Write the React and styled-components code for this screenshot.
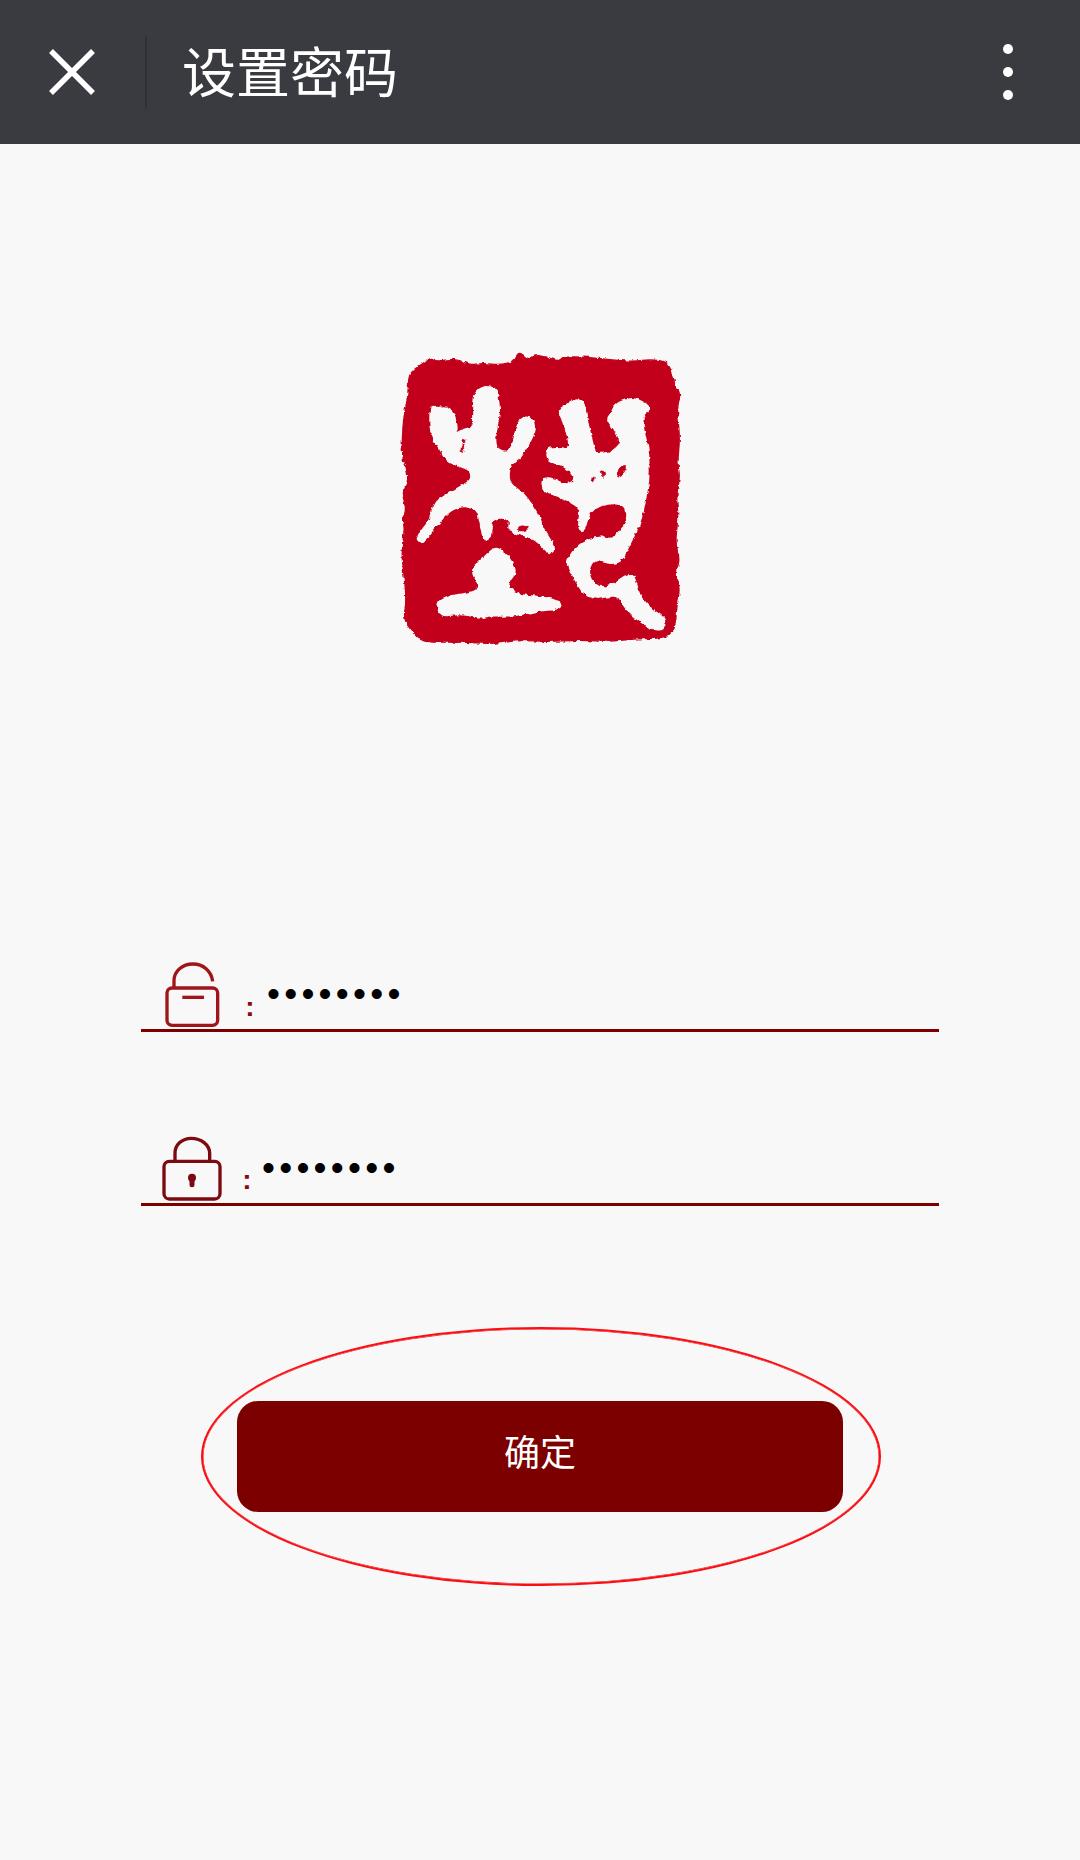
import React from 'react';
import styled, { createGlobalStyle } from 'styled-components';

const GlobalStyle = createGlobalStyle`
  html, body {
    margin: 0;
    padding: 0;
    background: #f8f8f8;
  }
  * { box-sizing: border-box; }
`;

const Page = styled.div`
  width: 1080px;
  height: 1860px;
  display: flex;
  flex-direction: column;
  background: #f8f8f8;
  font-family: "Noto Sans CJK SC", "Noto Sans", sans-serif;
  overflow: hidden;
`;

const Header = styled.header`
  height: 144px;
  flex-shrink: 0;
  display: flex;
  align-items: center;
  background: #3a3b40;
  padding: 0 0 0 49px;
`;

const CloseIcon = styled.svg`
  width: 46px;
  height: 46px;
  display: block;
`;

const Divider = styled.div`
  width: 2px;
  height: 73px;
  margin: 0 35px 0 50px;
  background: #303136;
`;

const Title = styled.h1`
  flex: 1;
  margin: 0 0 4px;
  font-size: 54px;
  font-weight: 400;
  line-height: 60px;
  color: #fff;
`;

const MoreButton = styled.div`
  display: flex;
  flex-direction: column;
  gap: 13px;
  margin-right: 67px;
`;

const MoreDot = styled.span`
  width: 10px;
  height: 10px;
  border-radius: 50%;
  background: #fff;
`;

const SealWrap = styled.div`
  margin-top: 186px;
  display: flex;
  justify-content: center;
`;

const SealSvg = styled.svg`
  width: 320px;
  height: 330px;
  display: block;
`;

const Form = styled.form`
  margin: 300px 141px 0;
  display: flex;
  flex-direction: column;
  gap: 102px;
`;

const Field = styled.div`
  height: 72px;
  display: flex;
  align-items: flex-end;
  border-bottom: 3px solid #7d0000;
  padding-left: ${(p) => p.$indent}px;
`;

const LockIcon = styled.svg`
  width: 62px;
  height: 66px;
  display: block;
  margin-bottom: 1px;
  flex-shrink: 0;
`;

const Colon = styled.span`
  width: ${(p) => p.$width}px;
  padding-left: 10px;
  margin-bottom: ${(p) => p.$lift}px;
  font-family: "Liberation Sans", sans-serif;
  font-size: 28px;
  font-weight: 700;
  line-height: 36px;
  color: #8a0a10;
  text-align: center;
  flex-shrink: 0;
`;

const PasswordInput = styled.input`
  flex: 1;
  min-width: 0;
  height: 40px;
  margin-bottom: ${(p) => p.$lift}px;
  padding: 0;
  border: 0;
  outline: 0;
  background: transparent;
  color: #000;
  font-family: "Liberation Sans", sans-serif;
  font-size: 37px;
  letter-spacing: 4.25px;
`;

const ButtonHalo = styled.div`
  width: 680px;
  height: 259px;
  margin: 121px 0 0 201px;
  display: flex;
  align-items: center;
  justify-content: center;
  border: 2px solid #f80f14;
  border-radius: 50%;
  box-shadow: inset 0 0 0 0.5px #f80f14;
`;

const ConfirmButton = styled.button`
  width: 606px;
  height: 111px;
  margin-right: 2px;
  padding: 0 0 13px;
  border: 0;
  border-radius: 21px;
  background: #7d0000;
  color: #fff;
  font-family: "Noto Sans CJK SC", "Noto Sans", sans-serif;
  font-size: 36px;
  font-weight: 400;
`;

const SEAL_OUTLINE = [[85,140],[100,120],[130,100],[150,85],[175,95],[205,88],[240,90],[265,105],[310,100],[360,105],[405,95],[412,70],[425,70],[445,90],[465,75],[500,80],[535,95],[550,80],[620,82],[700,90],[760,95],[810,88],[860,95],[878,130],[885,170],[902,190],[890,240],[900,320],[892,400],[900,440],[888,500],[895,560],[885,640],[900,690],[885,730],[900,770],[890,830],[885,900],[850,925],[770,925],[690,935],[600,930],[500,935],[420,930],[330,942],[250,935],[130,938],[95,905],[70,865],[80,810],[70,720],[65,660],[75,590],[65,570],[80,540],[65,490],[85,460],[80,410],[65,380],[70,260],[85,200]];
const SEAL_LEFT = [[152,228],[165,235],[200,230],[218,245],[225,270],[232,295],[222,315],[250,298],[275,295],[283,280],[282,200],[295,178],[322,168],[350,182],[355,215],[358,240],[352,280],[345,320],[348,355],[375,368],[395,355],[405,320],[418,260],[460,265],[467,295],[455,325],[435,360],[415,385],[390,405],[385,440],[392,465],[430,490],[455,525],[480,565],[495,610],[522,645],[520,665],[505,668],[480,640],[450,620],[415,612],[385,600],[392,570],[372,562],[340,565],[332,590],[330,625],[312,630],[303,590],[295,540],[265,528],[235,530],[205,545],[165,590],[130,635],[115,638],[112,620],[135,590],[150,570],[160,530],[175,510],[210,490],[250,465],[275,450],[272,420],[240,408],[205,395],[185,365],[160,325],[150,290]];
const SEAL_MOUND = [[348,652],[375,670],[395,695],[408,728],[385,755],[385,775],[415,795],[470,800],[520,808],[547,825],[530,838],[480,840],[430,852],[380,858],[330,855],[295,865],[270,855],[235,852],[178,858],[172,815],[205,798],[245,795],[285,785],[302,770],[280,730],[285,708],[305,690],[325,670]];
const SEAL_RIGHT = [[535,240],[560,225],[585,205],[610,212],[618,260],[630,310],[645,372],[665,372],[690,368],[710,355],[725,335],[700,290],[680,268],[695,250],[705,225],[735,210],[765,205],[808,228],[805,242],[785,260],[792,310],[803,350],[806,400],[806,450],[795,510],[785,560],[770,600],[750,640],[735,670],[720,695],[695,700],[670,695],[650,685],[632,700],[625,725],[635,755],[670,775],[700,765],[730,740],[760,732],[768,760],[780,800],[815,840],[855,865],[852,900],[815,897],[775,870],[745,845],[725,815],[710,795],[680,800],[640,805],[610,790],[590,755],[565,715],[562,690],[590,650],[625,630],[665,620],[700,630],[725,600],[745,565],[735,525],[700,518],[660,525],[630,545],[618,580],[612,600],[598,600],[597,570],[603,540],[575,515],[530,495],[490,485],[485,445],[520,445],[550,465],[580,458],[585,435],[560,412],[520,400],[502,385],[502,360],[520,352],[570,358],[565,320],[550,275]];
const SEAL_HOLES = [[[405,597],[430,585],[450,592],[430,606]], [[658,420],[670,418],[680,432],[668,446]], [[708,440],[715,415],[738,402],[735,425],[722,442]], [[632,456],[638,438],[644,440],[640,456]], [[243,345],[252,345],[250,368],[243,368]], [[245,325],[255,325],[255,340],[247,340]]];

// rounds the traced points with quadratic curves through their midpoints
const smooth = (pts) => {
  const mid = (a, b) => [(a[0] + b[0]) / 2, (a[1] + b[1]) / 2];
  const start = mid(pts[pts.length - 1], pts[0]);
  let d = `M${start[0]} ${start[1]}`;
  pts.forEach((p, i) => {
    const m = mid(p, pts[(i + 1) % pts.length]);
    d += `Q${p[0]} ${p[1]} ${m[0]} ${m[1]}`;
  });
  return d + 'Z';
};

const Seal = () => (
  <SealSvg viewBox="0 0 960 990">
    <defs>
      <filter id="rough" x="-5%" y="-5%" width="110%" height="110%">
        <feTurbulence type="fractalNoise" baseFrequency="0.07" numOctaves="2" seed="4" />
        <feDisplacementMap in="SourceGraphic" scale="12" xChannelSelector="R" yChannelSelector="G" />
      </filter>
    </defs>
    <g filter="url(#rough)">
      <path d={smooth(SEAL_OUTLINE)} fill="#c3051f" stroke="#c3051f" strokeWidth="4" />
      {[SEAL_LEFT, SEAL_MOUND, SEAL_RIGHT].map((pts, i) => (
        <path key={i} d={smooth(pts)} fill="#f8f8f8" stroke="#f8f8f8" strokeWidth="6" />
      ))}
      {SEAL_HOLES.map((pts, i) => (
        <path key={i} d={smooth(pts)} fill="#c3051f" stroke="#c3051f" strokeWidth="2" />
      ))}
    </g>
  </SealSvg>
);

const OpenLock = () => (
  <LockIcon viewBox="0 0 186 198" fill="none" stroke="#a01519" strokeWidth="10">
    <rect x="18" y="78" width="152" height="112" rx="15" />
    <path d="M39 78V56C39 28 64 6 96 6C126 6 151 26 155 58" />
    <path d="M64 106H129" />
  </LockIcon>
);

const ClosedLock = () => (
  <LockIcon viewBox="0 0 186 198" fill="none" stroke="#7d0a10" strokeWidth="10">
    <rect x="12" y="76" width="168" height="113" rx="16" />
    <path d="M45 76V52C45 26 66 7 94 7C123 7 149 26 149 52V76" />
    <circle cx="96" cy="125" r="12" fill="#7d0a10" stroke="none" />
    <path d="M96 125V146" strokeWidth="15" strokeLinecap="round" />
  </LockIcon>
);

export default function App() {
  return (
    <Page>
      <GlobalStyle />
      <Header>
        <CloseIcon viewBox="0 0 46 46" stroke="#fff" strokeWidth="5.5">
          <path d="M2 2L44 44M44 2L2 44" />
        </CloseIcon>
        <Divider />
        <Title>设置密码</Title>
        <MoreButton>
          <MoreDot />
          <MoreDot />
          <MoreDot />
        </MoreButton>
      </Header>
      <SealWrap>
        <Seal />
      </SealWrap>
      <Form onSubmit={(e) => e.preventDefault()}>
        <Field $indent={20}>
          <OpenLock />
          <Colon $width={44} $lift={4}>:</Colon>
          <PasswordInput type="password" readOnly value="12345678" $lift={15} />
        </Field>
        <Field $indent={19}>
          <ClosedLock />
          <Colon $width={40} $lift={5}>:</Colon>
          <PasswordInput type="password" readOnly value="12345678" $lift={15} />
        </Field>
      </Form>
      <ButtonHalo>
        <ConfirmButton type="button">确定</ConfirmButton>
      </ButtonHalo>
    </Page>
  );
}
